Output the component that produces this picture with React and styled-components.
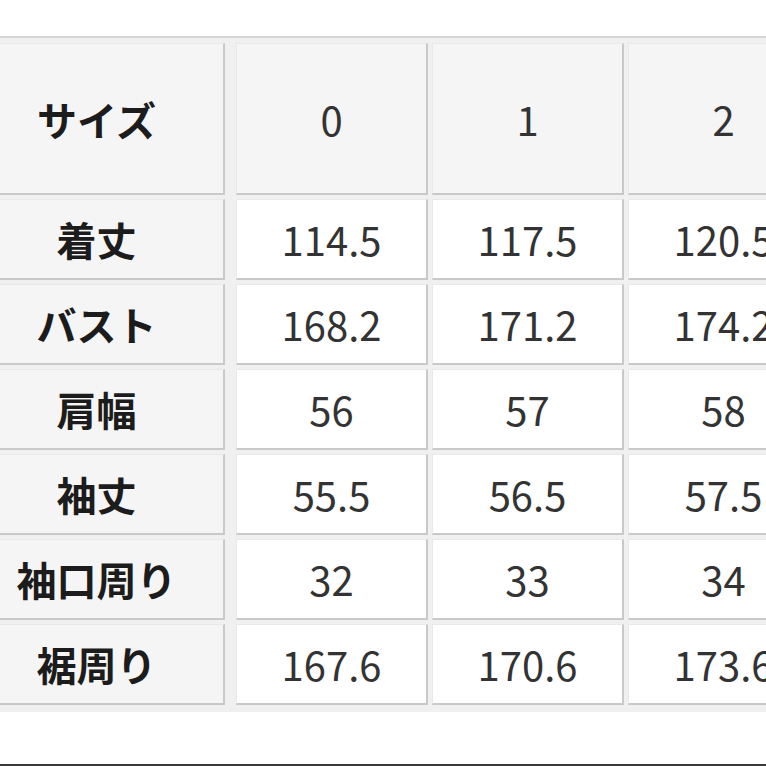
import React from "react";
import styled, { createGlobalStyle } from "styled-components";

const GlobalStyle = createGlobalStyle`
  html, body {
    margin: 0;
    padding: 0;
    background: #ffffff;
  }
  body {
    font-family: "Noto Sans CJK JP", "Noto Sans", sans-serif;
  }
`;

const Page = styled.div`
  width: 766px;
  height: 766px;
  overflow: hidden;
  display: flex;
  flex-direction: column;
  background: #ffffff;
`;

const TopSpace = styled.div`
  height: 36px;
  flex: none;
`;

const Table = styled.div`
  flex: none;
  margin-left: -33px;
  width: 900px;
  display: grid;
  grid-template-columns: 263px repeat(3, 192px);
  grid-template-rows: 152px repeat(6, 81px);
  gap: 4px;
  padding: 5px 0 7px 2px;
  background: #f0f0f0;
  border-top: 2px solid #d5d5d5;
`;

const Cell = styled.div`
  box-sizing: border-box;
  display: flex;
  align-items: center;
  justify-content: center;
  border-top: 1px solid #e9e9e9;
  border-left: 1px solid #e9e9e9;
  border-right: 2px solid #c9c9c9;
  border-bottom: 2px solid #c9c9c9;
  background: ${(p) => (p.$head ? "#f5f5f5" : "#ffffff")};
  margin-right: ${(p) => (p.$label ? "7px" : "0")};
  font-size: 40px;
  line-height: 1;
  font-weight: ${(p) => (p.$label ? 700 : 400)};
  color: ${(p) => (p.$label ? "#1c1c1c" : "#333333")};
  white-space: nowrap;
`;

const Filler = styled.div`
  flex: 1;
`;

const BottomLine = styled.div`
  height: 2px;
  flex: none;
  background: #3a3a3a;
`;

const sizes = ["0", "1", "2"];

const rows = [
  ["着丈", "114.5", "117.5", "120.5"],
  ["バスト", "168.2", "171.2", "174.2"],
  ["肩幅", "56", "57", "58"],
  ["袖丈", "55.5", "56.5", "57.5"],
  ["袖口周り", "32", "33", "34"],
  ["裾周り", "167.6", "170.6", "173.6"],
];

export default function App() {
  return (
    <>
      <GlobalStyle />
      <Page>
        <TopSpace />
        <Table>
          <Cell $head $label>
            サイズ
          </Cell>
          {sizes.map((s) => (
            <Cell key={s} $head>
              {s}
            </Cell>
          ))}
          {rows.map(([label, ...vals]) => (
            <React.Fragment key={label}>
              <Cell $head $label>
                {label}
              </Cell>
              {vals.map((v, i) => (
                <Cell key={i}>{v}</Cell>
              ))}
            </React.Fragment>
          ))}
        </Table>
        <Filler />
        <BottomLine />
      </Page>
    </>
  );
}
